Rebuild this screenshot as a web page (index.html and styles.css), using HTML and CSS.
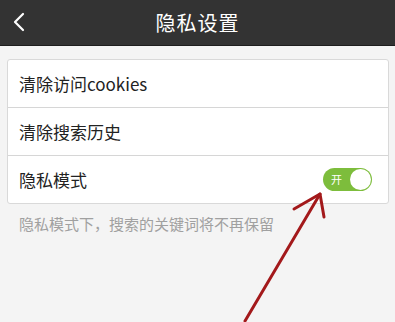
FILE: index.html
```html
<!DOCTYPE html>
<html lang="zh">
<head>
<meta charset="utf-8">
<link rel="stylesheet" href="styles.css">
</head>
<body>
<div class="page">
  <header class="bar">
    <svg class="back" width="12" height="20" viewBox="0 0 12 20"><path d="M10 2 L2 10 L10 18" fill="none" stroke="#fff" stroke-width="2.2" stroke-linecap="round" stroke-linejoin="round"/></svg>
    <h1 class="title">隐私设置</h1>
  </header>
  <main class="content">
    <div class="card">
      <div class="row">清除访问cookies</div>
      <div class="row">清除搜索历史</div>
      <div class="row">
        <span>隐私模式</span>
        <span class="toggle"><span class="toggle-label">开</span><span class="knob"></span></span>
      </div>
    </div>
    <p class="hint">隐私模式下，搜索的关键词将不再保留</p>
  </main>
  <svg class="arrow" width="395" height="322" viewBox="0 0 395 322">
    <g fill="none" stroke="#a3191b" stroke-width="3" stroke-linecap="round" stroke-linejoin="round">
      <path d="M245 321 L320 194"/>
      <path d="M294 209 L320 194 L324 217"/>
    </g>
  </svg>
</div>
</body>
</html>
```
FILE: styles.css
```css
html, body {
  margin: 0;
  padding: 0;
}
body {
  font-family: "Noto Sans CJK SC", "Noto Sans", sans-serif;
  background: #f4f4f4;
}
.page {
  position: relative;
  width: 395px;
  height: 322px;
  overflow: hidden;
  background: #f4f4f4;
}
.bar {
  height: 45px;
  background: #333333;
  border-bottom: 1px solid #1e1e1e;
  display: flex;
  align-items: center;
  justify-content: center;
  position: relative;
}
.back {
  position: absolute;
  left: 13px;
  top: 12px;
}
.title {
  margin: 0;
  color: #ffffff;
  font-size: 20px;
  font-weight: normal;
  letter-spacing: 1px;
  line-height: 1;
}
.content {
  padding: 13px 6px 0 7px;
}
.card {
  background: #ffffff;
  border: 1px solid #d9d9d9;
  border-radius: 3px;
}
.row {
  height: 47px;
  display: flex;
  align-items: center;
  justify-content: space-between;
  padding: 0 16px 0 11px;
  font-size: 17px;
  color: #222222;
  border-top: 1px solid #d6d6d6;
}
.row:first-child {
  border-top: none;
}
.toggle {
  width: 49px;
  height: 23px;
  border-radius: 12px;
  background: #7dbd3c;
  display: flex;
  align-items: center;
  justify-content: space-between;
  padding: 0 1px 0 8px;
  box-sizing: border-box;
}
.toggle-label {
  color: #ffffff;
  font-size: 11px;
  line-height: 1;
}
.knob {
  width: 21px;
  height: 21px;
  border-radius: 50%;
  background: #ffffff;
}
.hint {
  margin: 10px 0 0 12px;
  font-size: 15px;
  color: #a0a0a0;
  line-height: 20px;
}
.arrow {
  position: absolute;
  left: 0;
  top: 0;
}
```
